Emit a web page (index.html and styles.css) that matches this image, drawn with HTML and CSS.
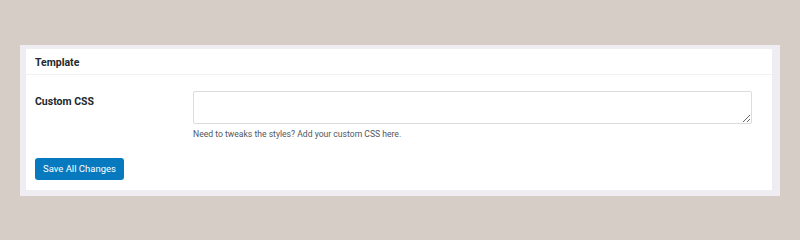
FILE: index.html
```html
<!DOCTYPE html>
<html lang="en">
<head>
  <meta charset="UTF-8" />
  <title>Template Settings</title>
  <meta name="viewport" content="width=device-width, initial-scale=1.0" />
  <link rel="stylesheet" href="styles.css">
</head>
<body>
  <div class="wrap">
    <div class="card">
      <div class="card-head">Template</div>
      <div class="row">
        <label class="row-label" for="customCss">Custom CSS</label>
        <div class="row-field">
          <textarea id="customCss"></textarea>
          <p class="hint">Need to tweaks the styles? Add your custom CSS here.</p>
        </div>
      </div>
      <div class="actions">
        <button class="btn-primary">Save All Changes</button>
      </div>
    </div>
  </div>
</body>
</html>
```

FILE: styles.css
```css
* { box-sizing: border-box; }

body {
  margin: 0;
  padding: 45px 20px 0;
  background: #d7cdc7;
  font-family: Roboto, 'Liberation Sans', sans-serif;
  color: #23282d;
}

.wrap {
  background: #efedf1;
  padding: 4px 8px 6px 6px;
}

.card {
  background: #fff;
  height: 141px;
}

.card-head {
  height: 26px;
  padding: 7px 9px 0;
  font-size: 10.5px;
  font-weight: bold;
  border-bottom: 1px solid #f1f0f2;
}

.row {
  display: flex;
  padding: 16px 0 0 9px;
}

.row-label {
  width: 158px;
  font-size: 10.5px;
  font-weight: bold;
  padding-top: 4px;
}

.row-field {
  flex: 1;
  padding-right: 20px;
}

.row-field textarea {
  display: block;
  width: 100%;
  height: 33px;
  border: 1px solid #dcdcde;
  border-radius: 2px;
  resize: vertical;
  margin: 0;
}

.hint {
  margin: 5px 0 0;
  font-size: 8.6px;
  color: #50575e;
}

.actions {
  padding: 18px 0 0 9px;
}

.btn-primary {
  background: #0679bf;
  color: #fff;
  border: none;
  border-radius: 3px;
  font-family: Roboto, 'Liberation Sans', sans-serif;
  font-size: 9.5px;
  height: 22px;
  padding: 0 8px;
  cursor: pointer;
}
```
